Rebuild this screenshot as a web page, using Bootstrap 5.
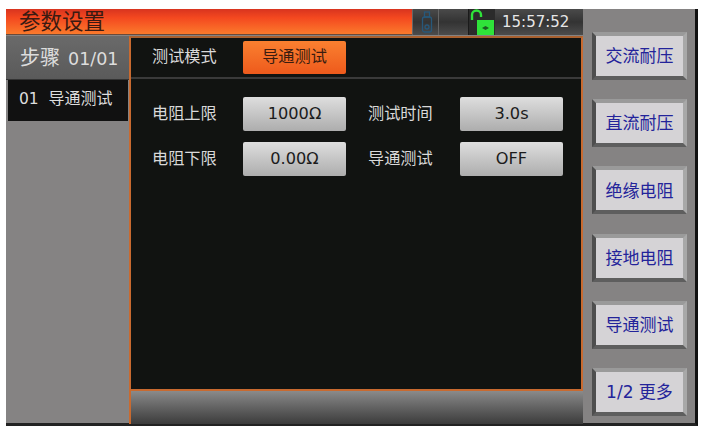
<!DOCTYPE html>
<html lang="zh"><head><meta charset="utf-8"><title>参数设置</title>
<link href="https://cdn.jsdelivr.net/npm/bootstrap@5.3.0/dist/css/bootstrap.min.css" rel="stylesheet">
<style>
html,body{height:100%;background:#fff;overflow:hidden}
body{font-family:"DejaVu Sans","Noto Sans CJK SC",sans-serif;}
.scr{margin:9px 0 0 6px;width:692px;height:417px;background:#858383;border-right:3px solid #111;border-bottom:3px solid #222;opacity:.999}
.lft{width:123px}
.mid{width:454px}
.rgt{width:112px;padding:23px 8px 0 9px;gap:19.2px;background:#858383}
.tbar{height:26px}
.ttl{width:406px;height:26px;background:linear-gradient(#d8341f 0,#f4481f 35%,#fb7a2c 100%);color:#3a1a12;font-size:21.500px;line-height:26px;padding-left:13px;border-bottom:1px solid #6b4a3a}
.sta{height:26px;width:171px;left:406px;background:linear-gradient(#4a4a4a,#333 50%,#4c4c4c)}
.ustk{width:27px;height:26px;border-right:1px solid #666;border-left:1px solid #666;padding-left:3px}
.lockb{width:27px;height:26px;background:#2b2b2b;border-left:1px solid #1a1a1a;margin-left:29px}
.clk{color:#e6e6e6;font-size:15px;margin-left:7px;line-height:26px}
.stp{height:44px;background:linear-gradient(#6a6a6a,#5a5a5a);color:#ddd;padding-left:14px;font-size:17.500px;line-height:44px;border-bottom:1px solid #333;margin-top:1px;white-space:nowrap}
.stp b{font-weight:400;font-size:20px;margin-right:8px}
.stpi{height:41px;background:#111;color:#ddd;font-size:15.500px;line-height:38px;padding-left:11px;margin-left:2px;margin-right:1px;white-space:nowrap}
.stpi i{font-style:normal;font-size:16px}
.body{height:355px;background:#111311;border:2px solid #c86a30;border-top-color:#a8602f;margin-top:1px}
.moder{height:41px;border-bottom:2px solid #3a3a3a;padding:0 0 0 21px}
.lb{color:#d9d9d9;font-size:16.200px;width:91px;flex:none}
.lb2{margin-left:22px;width:92px}
.vb{width:103px;height:34px;border-radius:2px;background:linear-gradient(#dedede,#adadad);color:#1c1c1c;font-size:16.200px;flex:none}
.vbo{background:linear-gradient(#fa8030,#ee5a1c);color:#3a1c10;height:33px}
.prm{padding:18px 0 0 21px;gap:11px}
.fbar{height:33px;background:linear-gradient(#8a8a8a,#666 45%,#3c3c3c);border-left:2px solid #c86a30}
.kbtn{height:48px;width:95px;padding-top:2px;background:#d5d3d6;color:#23239a;font-size:17px;border-style:solid;border-width:4px;border-color:#9a9a9a #a8a8a8 #5e5e5e #4e4e4e;white-space:nowrap}
</style></head><body>
<div class="scr d-flex flex-column position-relative">
  <div class="d-flex tbar">
    <div class="ttl">参数设置</div>
  </div>
  <div class="d-flex flex-grow-1">
    <div class="lft d-flex flex-column">
      <div class="stp"><b>步骤</b>01/01</div>
      <div class="stpi">01&nbsp;&nbsp;<i>导通测试</i></div>
    </div>
    <div class="mid d-flex flex-column">
      <div class="body">
        <div class="moder d-flex align-items-center"><span class="lb">测试模式</span><div class="vb vbo d-flex align-items-center justify-content-center">导通测试</div></div>
        <div class="prm d-flex flex-column">
          <div class="d-flex align-items-center"><span class="lb">电阻上限</span><div class="vb d-flex align-items-center justify-content-center">1000Ω</div><span class="lb lb2">测试时间</span><div class="vb d-flex align-items-center justify-content-center">3.0s</div></div>
          <div class="d-flex align-items-center"><span class="lb">电阻下限</span><div class="vb d-flex align-items-center justify-content-center">0.00Ω</div><span class="lb lb2">导通测试</span><div class="vb d-flex align-items-center justify-content-center">OFF</div></div>
        </div>
      </div>
      <div class="fbar"></div>
    </div>
  </div>
  <div class="sta d-flex position-absolute top-0">
    <div class="ustk d-flex align-items-center justify-content-center"><svg width="12" height="22" viewBox="0 0 12 22" fill="none" stroke="#27587a" stroke-width="1.3"><rect x="3.5" y="1" width="5" height="5"/><rect x="1.5" y="6" width="9" height="15" rx="2"/><circle cx="6" cy="16" r="2"/></svg></div>
    <div class="lockb d-flex align-items-center justify-content-center"><svg width="26" height="26" viewBox="0 0 26 26"><path d="M3 11V6a4.500 4.500 0 0 1 9 0v2" fill="none" stroke="#2fe23a" stroke-width="2.400"/><rect x="8" y="11" width="17" height="15" fill="#2fe23a"/><path d="M13 19l3.500-2 3.500 2-3.500 2z" fill="#1b5c22"/></svg></div>
    <div class="clk">15:57:52</div>
  </div>
  <div class="rgt d-flex flex-column position-absolute top-0 end-0 bottom-0">
    <div class="kbtn d-flex align-items-center justify-content-center">交流耐压</div>
    <div class="kbtn d-flex align-items-center justify-content-center">直流耐压</div>
    <div class="kbtn d-flex align-items-center justify-content-center">绝缘电阻</div>
    <div class="kbtn d-flex align-items-center justify-content-center">接地电阻</div>
    <div class="kbtn d-flex align-items-center justify-content-center">导通测试</div>
    <div class="kbtn d-flex align-items-center justify-content-center">1/2 更多</div>
  </div>
</div>
</body></html>
